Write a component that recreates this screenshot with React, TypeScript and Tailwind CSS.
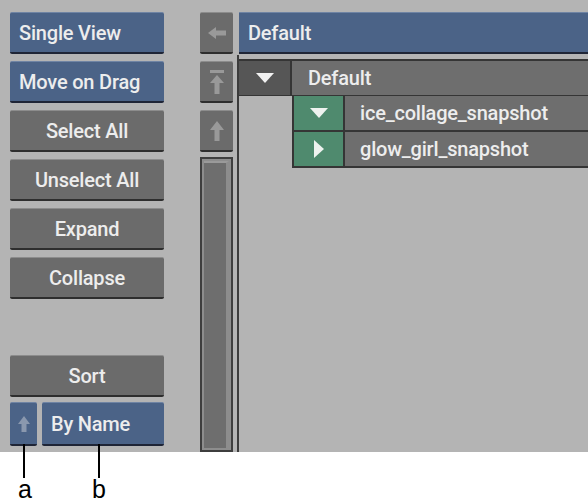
import React from 'react';

const font = { fontFamily: 'Roboto, "Liberation Sans", sans-serif' };

const Btn: React.FC<{ label: string; blue?: boolean; left?: boolean }> = ({ label, blue, left }) => (
  <div
    className={`h-[42px] shrink-0 rounded-[2px] border-t border-b-2 flex items-center text-[20px] font-medium tracking-[-0.2px] text-[#ededed] ${
      blue ? 'bg-[#4b6387] border-t-[#6f84a4] border-b-[#1f2536]' : 'bg-[#6b6b6b] border-t-[#8c8c8c] border-b-[#2e2e2e]'
    } ${left ? 'justify-start pl-[9px]' : 'justify-center'}`}
  >
    {label}
  </div>
);

const IconBtn: React.FC<{ children: React.ReactNode }> = ({ children }) => (
  <div className="h-[42px] w-[33px] shrink-0 rounded-[2px] border-t border-b-2 bg-[#6b6b6b] border-t-[#8c8c8c] border-b-[#2e2e2e] flex items-center justify-center">
    {children}
  </div>
);

const App: React.FC = () => {
  return (
    <div className="w-[588px] h-[504px] bg-white relative overflow-hidden" style={font}>
      <div className="h-[452px] bg-[#b4b4b4] flex">
        {/* left buttons */}
        <div className="w-[154px] ml-[10px] pt-[12px] pb-[6px] flex flex-col gap-[7px]">
          <Btn label="Single View" blue left />
          <Btn label="Move on Drag" blue left />
          <Btn label="Select All" />
          <Btn label="Unselect All" />
          <Btn label="Expand" />
          <Btn label="Collapse" />
          <div className="mt-auto flex flex-col gap-[5px]">
            <Btn label="Sort" />
            <div className="flex gap-[5px]">
              <div className="h-[44px] w-[27px] rounded-[2px] border-t border-b-2 bg-[#4b6387] border-t-[#6f84a4] border-b-[#1f2536] flex items-center justify-center">
                <svg width="14" height="18" viewBox="0 0 14 18">
                  <path d="M7 1 L13 9 L9.5 9 L9.5 17 L4.5 17 L4.5 9 L1 9 Z" fill="#8a98ae" />
                </svg>
              </div>
              <div className="flex-1 h-[44px] rounded-[2px] border-t border-b-2 bg-[#4b6387] border-t-[#6f84a4] border-b-[#1f2536] flex items-center pl-[9px] text-[20px] font-medium tracking-[-0.2px] text-[#ededed]">
                By Name
              </div>
            </div>
          </div>
        </div>

        {/* middle column */}
        <div className="w-[33px] ml-[36px] pt-[12px] flex flex-col gap-[7px]">
          <IconBtn>
            <svg width="20" height="14" viewBox="0 0 20 14">
              <path d="M1 7 L9 1 L9 4.5 L19 4.5 L19 9.5 L9 9.5 L9 13 Z" fill="#999999" />
            </svg>
          </IconBtn>
          <IconBtn>
            <svg width="16" height="26" viewBox="0 0 16 26">
              <rect x="1" y="1" width="14" height="3" fill="#999999" />
              <path d="M8 6 L15 14 L10.5 14 L10.5 25 L5.5 25 L5.5 14 L1 14 Z" fill="#999999" />
            </svg>
          </IconBtn>
          <IconBtn>
            <svg width="16" height="22" viewBox="0 0 16 22">
              <path d="M8 1 L15 10 L10.5 10 L10.5 21 L5.5 21 L5.5 10 L1 10 Z" fill="#999999" />
            </svg>
          </IconBtn>
          <div className="flex-1 -mt-[2px] border-2 border-[#3e3e3e] bg-[#8d8d8d] p-[2px] flex">
            <div className="flex-1 bg-[#6e6e6e] border-t-2 border-[#9a9a9a] border-r-[3px] border-r-[#8d8d8d]" />
          </div>
        </div>

        {/* right panel */}
        <div className="flex-1 pt-[12px] flex flex-col">
          <div className="ml-[6px] h-[42px] shrink-0 bg-[#4b6387] border-t border-t-[#6f84a4] border-b-2 border-b-[#1f2536] flex items-center pl-[9px] text-[20px] font-medium tracking-[-0.2px] text-[#ededed]">
            Default
          </div>
          <div className="flex-1 mt-[1px] ml-[4px] border-l-2 border-[#3c3c3c] pt-[4px] flex flex-col">
            <div className="h-[37px] flex border-t-2 border-b border-[#353535]">
              <div className="w-[53px] bg-[#565656] border-r-2 border-[#353535] flex items-center justify-center">
                <svg width="20" height="12" viewBox="0 0 20 12">
                  <path d="M1 1 L19 1 L10 11 Z" fill="#f2f2f2" />
                </svg>
              </div>
              <div className="flex-1 bg-[#6e6e6e] flex items-center pl-[16px] text-[20px] font-medium tracking-[-0.2px] text-[#ededed]">
                Default
              </div>
            </div>
            {[
              { open: true, label: 'ice_collage_snapshot' },
              { open: false, label: 'glow_girl_snapshot' },
            ].map((r) => (
              <div key={r.label} className="ml-[53px] h-[36px] flex border-l-2 border-b-2 border-[#353535]">
                <div className="w-[51px] bg-[#4f8a6e] border-r-2 border-[#353535] flex items-center justify-center">
                  {r.open ? (
                    <svg width="20" height="12" viewBox="0 0 20 12">
                      <path d="M1 1 L19 1 L10 11 Z" fill="#eef2ef" />
                    </svg>
                  ) : (
                    <svg width="12" height="18" viewBox="0 0 12 18">
                      <path d="M1 0 L11 9 L1 18 Z" fill="#eef2ef" />
                    </svg>
                  )}
                </div>
                <div className="flex-1 bg-[#6e6e6e] flex items-center pl-[15px] text-[20px] font-medium tracking-[-0.2px] text-[#ededed]">
                  {r.label}
                </div>
              </div>
            ))}
          </div>
        </div>
      </div>

      {/* callouts */}
      <div className="absolute left-[23px] top-[444px] w-[2px] h-[34px] bg-black" />
      <div className="absolute left-[98px] top-[444px] w-[2px] h-[34px] bg-black" />
      <div
        className="absolute left-[13px] top-[474px] w-[24px] text-center text-[25px] leading-[30px] text-black"
        style={{ fontFamily: '"Liberation Sans", Arial, sans-serif' }}
      >
        a
      </div>
      <div
        className="absolute left-[87px] top-[474px] w-[24px] text-center text-[25px] leading-[30px] text-black"
        style={{ fontFamily: '"Liberation Sans", Arial, sans-serif' }}
      >
        b
      </div>
    </div>
  );
};

export default App;
